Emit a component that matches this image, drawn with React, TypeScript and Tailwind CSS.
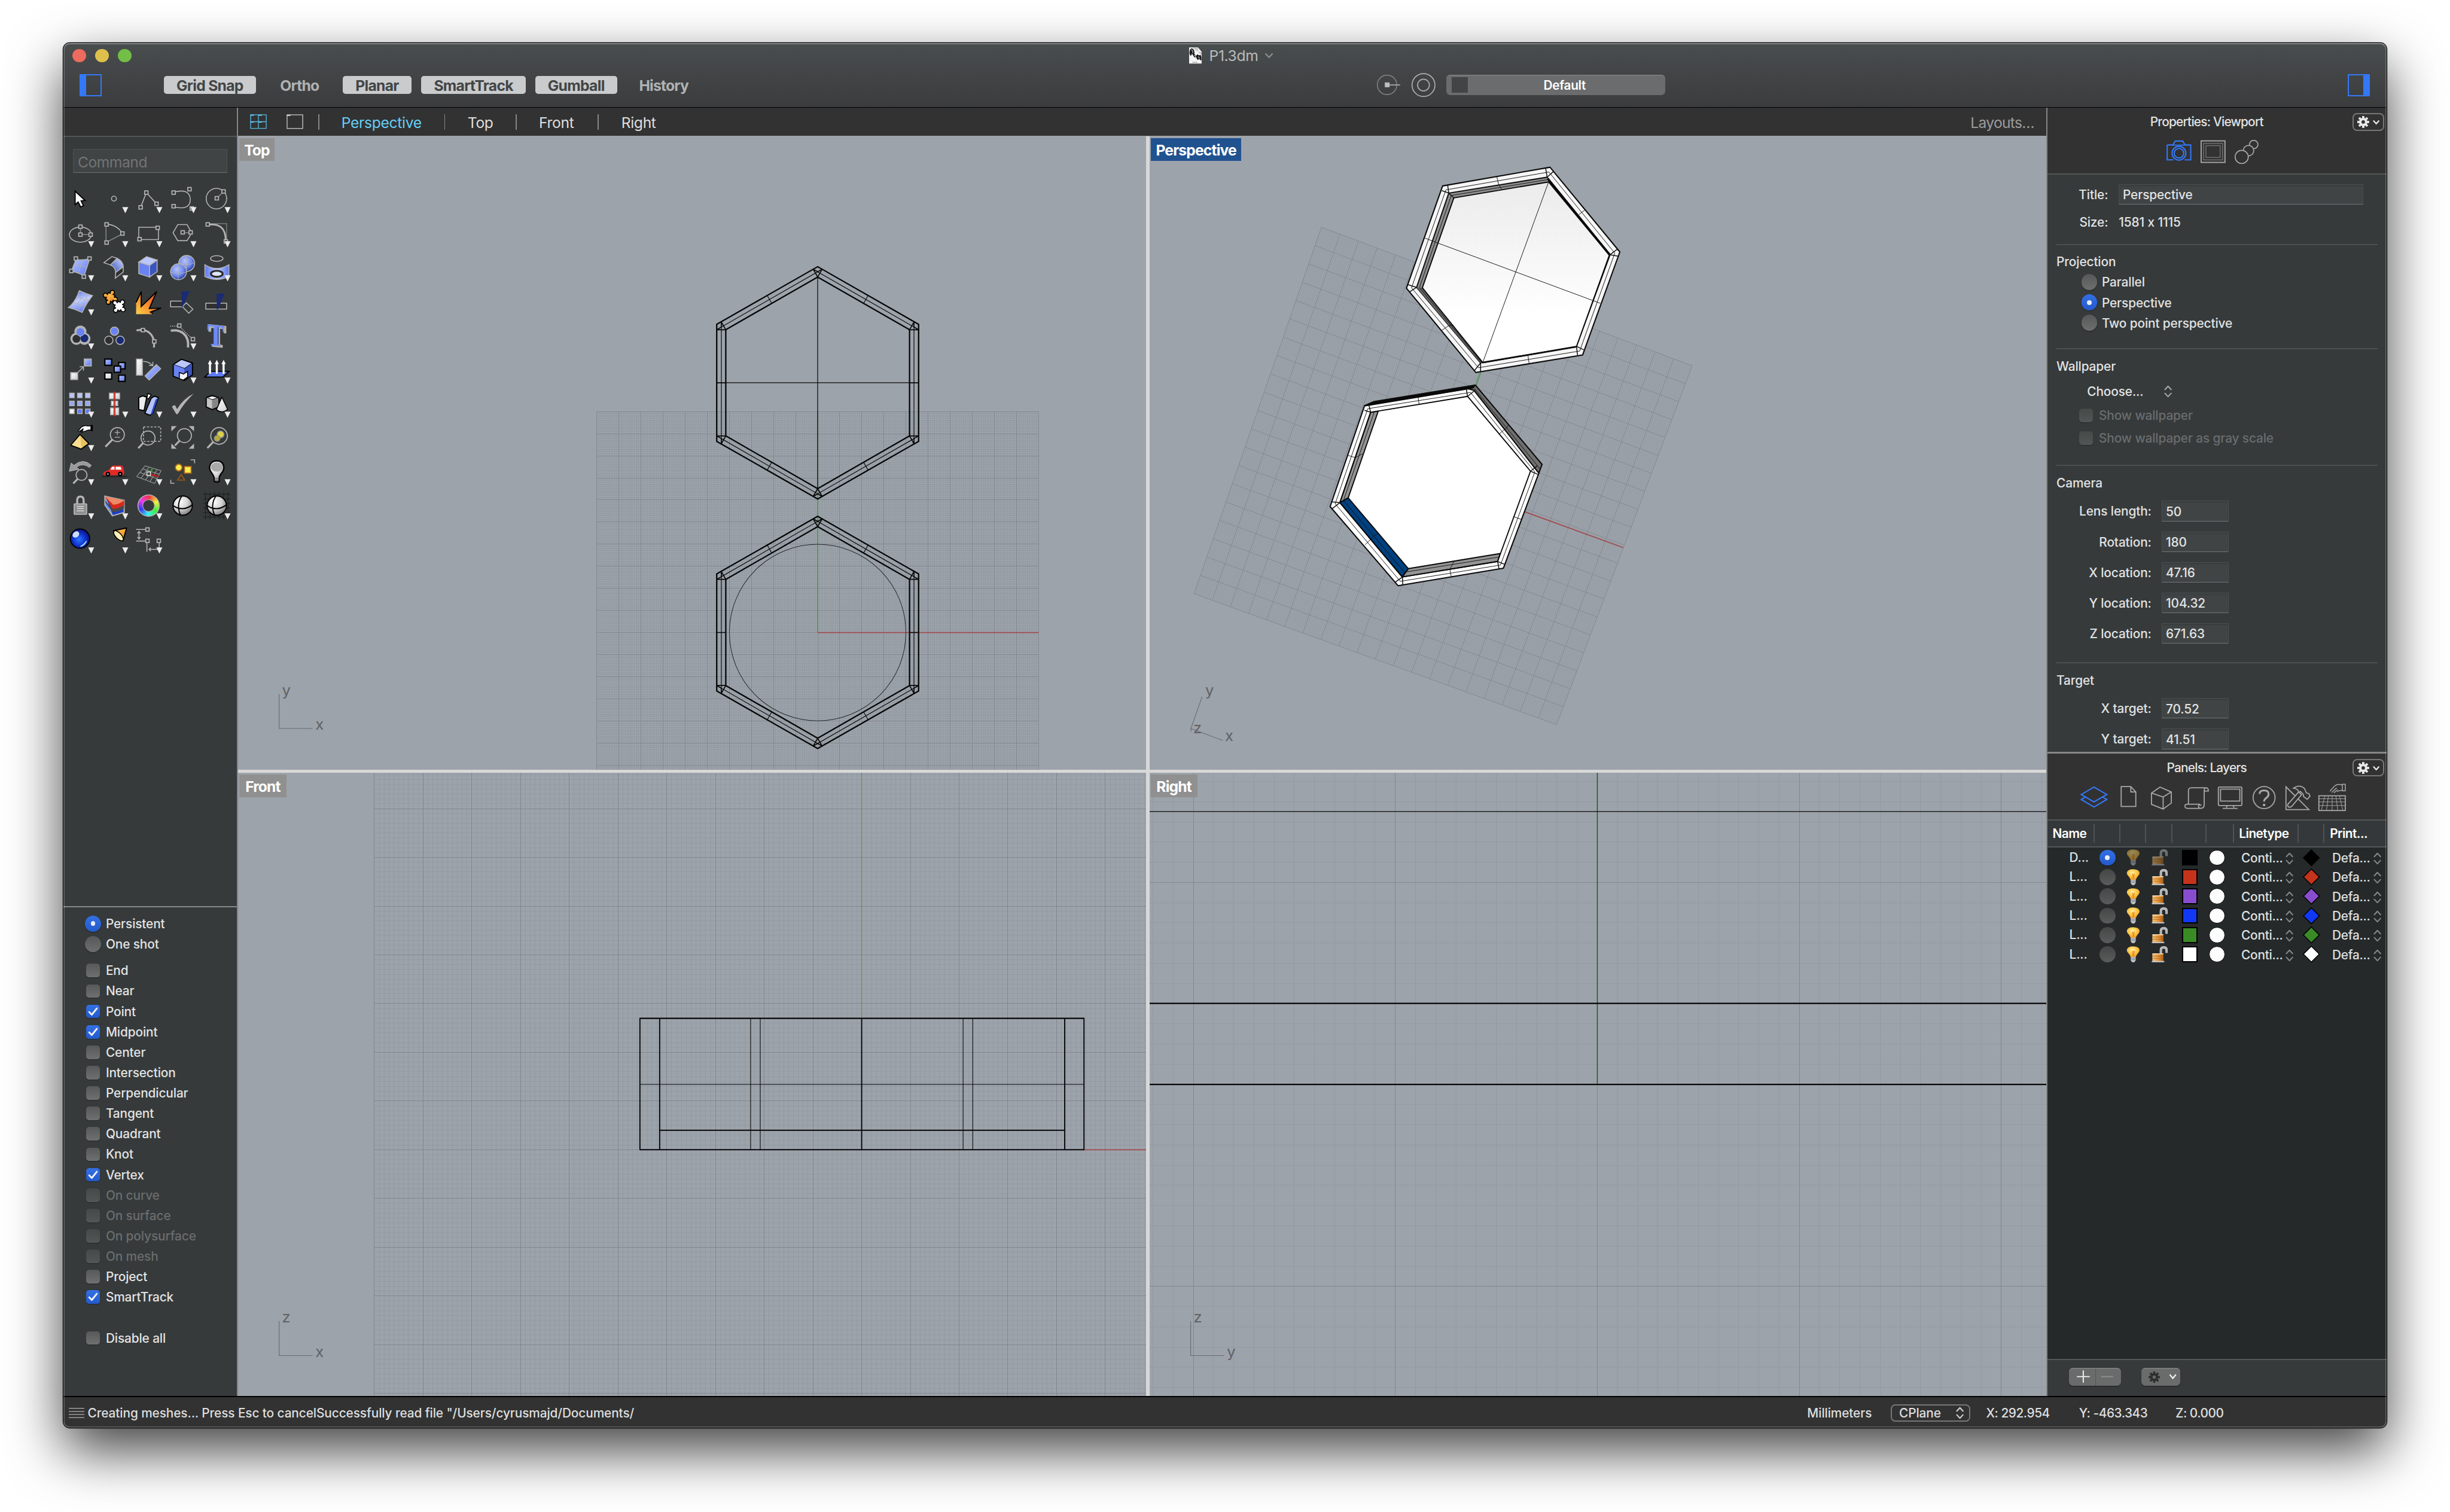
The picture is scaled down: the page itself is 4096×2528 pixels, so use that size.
import React from 'react';

type Kids = { children?: React.ReactNode };

/* ------------------------------------------------------------------ */
/* Tool palette                                                        */
/* ------------------------------------------------------------------ */

const G = '#b4b4b4';
const DIM = '#838686';
const PANEL = '#363a3b';

function Defs() {
  return (
    <svg className="absolute h-0 w-0">
      <defs>
        <linearGradient id="blue" x1="0" y1="0" x2="1" y2="1">
          <stop offset="0" stopColor="#b9c6fb" />
          <stop offset="1" stopColor="#5a76f2" />
        </linearGradient>
        <linearGradient id="blueDark" x1="1" y1="0" x2="0" y2="1">
          <stop offset="0" stopColor="#d3dcff" />
          <stop offset="1" stopColor="#2c48b8" />
        </linearGradient>
        <linearGradient id="cylinder" x1="0" y1="0" x2="1" y2="0">
          <stop offset="0" stopColor="#5b77f4" />
          <stop offset="0.5" stopColor="#c3cefc" />
          <stop offset="1" stopColor="#5b77f4" />
        </linearGradient>
        <linearGradient id="sheet" x1="0.3" y1="0" x2="0.6" y2="1">
          <stop offset="0" stopColor="#5b77f4" />
          <stop offset="0.45" stopColor="#c3cefc" />
          <stop offset="1" stopColor="#5b77f4" />
        </linearGradient>
        <radialGradient id="blueBall" cx="0.4" cy="0.35" r="0.7">
          <stop offset="0" stopColor="#b7c4fb" />
          <stop offset="0.6" stopColor="#6f87ee" />
          <stop offset="1" stopColor="#1c3190" />
        </radialGradient>
        <radialGradient id="deepBall" cx="0.45" cy="0.55" r="0.6">
          <stop offset="0" stopColor="#2a78ff" />
          <stop offset="0.55" stopColor="#1030c8" />
          <stop offset="1" stopColor="#060a6e" />
        </radialGradient>
        <radialGradient id="whiteBall" cx="0.35" cy="0.3" r="0.8">
          <stop offset="0" stopColor="#ffffff" />
          <stop offset="0.5" stopColor="#d4d4d4" />
          <stop offset="1" stopColor="#6a6a6a" />
        </radialGradient>
        <linearGradient id="white" x1="0" y1="0" x2="1" y2="1">
          <stop offset="0" stopColor="#ffffff" />
          <stop offset="1" stopColor="#cfcfcf" />
        </linearGradient>
        <linearGradient id="fire" x1="1" y1="0" x2="0" y2="1">
          <stop offset="0.1" stopColor="#ee4522" />
          <stop offset="0.55" stopColor="#f58a2e" />
          <stop offset="1" stopColor="#fcd24a" />
        </linearGradient>
        <linearGradient id="gold" x1="0" y1="0" x2="1" y2="1">
          <stop offset="0" stopColor="#fbd45a" />
          <stop offset="1" stopColor="#ef7a1c" />
        </linearGradient>
        <radialGradient id="lamp" cx="0.45" cy="0.35" r="0.65">
          <stop offset="0" stopColor="#fff3a8" />
          <stop offset="0.6" stopColor="#fbc23c" />
          <stop offset="1" stopColor="#ee9a2b" />
        </radialGradient>
        <linearGradient id="brass" x1="0" y1="0" x2="1" y2="0">
          <stop offset="0" stopColor="#f8c57c" />
          <stop offset="0.6" stopColor="#dd8f36" />
          <stop offset="1" stopColor="#a65a14" />
        </linearGradient>
        <linearGradient id="face" x1="0" y1="0" x2="0" y2="1">
          <stop offset="0" stopColor="#ebebeb" />
          <stop offset="0.75" stopColor="#ffffff" />
        </linearGradient>
      </defs>
    </svg>
  );
}

function Sq({ x, y }: { x: number; y: number }) {
  return <rect x={x - 9} y={y - 9} width="18" height="18" fill={PANEL} stroke={G} strokeWidth="5.5" />;
}
function P({ d, w = 5, c = G, f = 'none', ...rest }: { d: string; w?: number; c?: string; f?: string } & Record<string, unknown>) {
  return <path d={d} stroke={c} strokeWidth={w} fill={f} {...rest} />;
}
function Lens({ x, y, r, hx, hy }: { x: number; y: number; r: number; hx: number; hy: number }) {
  const k = r / Math.hypot(hx - x, hy - y);
  return (
    <>
      <circle cx={x} cy={y} r={r} fill="none" stroke={G} strokeWidth="5.5" />
      <path d={`M${x + (hx - x) * k} ${y + (hy - y) * k}L${hx} ${hy}`} stroke={G} strokeWidth="10" />
    </>
  );
}

function Ring() {
  const seg = Array.from({ length: 36 }, (_, i) => i);
  const pt = (a: number) => `${456 + 43 * Math.cos(a)} ${816 + 43 * Math.sin(a)}`;
  return (
    <>
      <circle cx="456" cy="816" r="59" fill={G} />
      {seg.map((i) => {
        const a = (i * Math.PI) / 18 - Math.PI / 2;
        return <path key={i} d={`M${pt(a)}A43 43 0 0 1 ${pt(a + 0.19)}`} fill="none" stroke={`hsl(${i * 10} 90% 58%)`} strokeWidth="22" />;
      })}
      <circle cx="456" cy="816" r="31" fill={PANEL} stroke={G} strokeWidth="3" />
    </>
  );
}
function WireSphere({ x }: { x: number }) {
  return (
    <>
      <circle cx={x} cy="816" r="51" fill="url(#whiteBall)" stroke="#000" strokeWidth="6" />
      <P d={`M${x - 5} 766Q${x - 35} 812 ${x - 12} 866M${x - 51} 816Q${x} 850 ${x + 51} 812`} c="#000" w={6} />
    </>
  );
}
function Puzzle({ x, y, fill, a }: { x: number; y: number; fill: string; a: number }) {
  const knobs = [
    [0, -28],
    [0, 28],
    [-28, 0],
    [28, 0],
  ];
  return (
    <g transform={`translate(${x} ${y}) rotate(${a})`}>
      <g fill="#000">
        <rect x="-22" y="-22" width="44" height="44" />
        {knobs.map(([kx, ky], i) => (
          <circle key={i} cx={kx} cy={ky} r="14" />
        ))}
      </g>
      <rect x="-16.500" y="-16.500" width="33" height="33" fill={fill} />
      {knobs.map(([kx, ky], i) => (
        <g key={i} fill={fill}>
          <circle cx={kx} cy={ky} r="8.500" />
          <circle cx={kx * 0.6} cy={ky * 0.6} r="6" />
        </g>
      ))}
    </g>
  );
}

/* Two sheets of five columns; a cell is 180 units wide, first one at (6, top). */
const upper: [boolean, React.ReactNode][] = [
  [false, <path d="M68 262V334L84 320L97 346L112 339L100 314L121 312Z" fill="#fff" stroke="#000" strokeWidth="6" />],
  [true, <circle cx="273" cy="302" r="13" fill="none" stroke={G} strokeWidth="5" />],
  [true, <><P d="M414 348L444 270L498 329" /><Sq x={414} y={348} /><Sq x={444} y={270} /><Sq x={498} y={329} /></>],
  [true, <><P d="M588 268C640 254 674 262 676 304C678 350 640 358 588 345" /><Sq x={588} y={270} /><Sq x={588} y={342} /><Sq x={672} y={252} /><Sq x={684} y={354} /></>],
  [true, <><circle cx="814" cy="302" r="54" fill="none" stroke={G} strokeWidth="5" /><P d="M816 300L852 264" c={DIM} /><Sq x={816} y={300} /><Sq x={852} y={264} /></>],
  [true, <><ellipse cx="96" cy="492" rx="58" ry="40" fill="none" stroke={G} strokeWidth="5" /><P d="M96 450V492H150" c={DIM} /><Sq x={96} y={450} /><Sq x={96} y={492} /><Sq x={150} y={492} /></>],
  [true, <><P d="M231 440V534L318 488" c={DIM} /><P d="M234 437Q290 440 318 486" /><Sq x={234} y={438} /><Sq x={318} y={486} /><Sq x={234} y={534} /></>],
  [true, <><P d="M404 453H508V518H404Z" /><Sq x={504} y={456} /><Sq x={408} y={516} /></>],
  [true, <><P d="M585 482L610 439H659L684 482L659 524H610Z" /><P d="M636 482H678" c={DIM} /><Sq x={636} y={480} /><Sq x={678} y={480} /></>],
  [true, <><P d="M768 434H868V528" c={DIM} w={4} /><P d="M778 439C830 436 862 455 863 520" w={9} /><Sq x={768} y={438} /><Sq x={864} y={528} /></>],
  [true, <><P d="M72 624Q108 628 145 620L115 710Q82 690 48 686Z" f="url(#blue)" /><P d="M108 624L84 698M60 655Q95 650 130 664" w={3} /><Sq x={72} y={618} /><Sq x={144} y={618} /><Sq x={48} y={684} /><Sq x={114} y={714} /></>],
  [true, <><P d="M220 640L262 608L290 617L255 652Z" f="#2f3031" /><P d="M255 652L290 617Q322 632 322 662L282 692Q282 664 255 652Z" f="url(#blueDark)" /><P d="M282 692L322 662V690L280 722Z" f="#2f3031" /></>],
  [true, <><P d="M404 637L445 608L501 626L461 655Z" f="#bcc8fb" /><P d="M404 637L461 655V716L404 698Z" f="#6a83f3" /><P d="M461 655L501 626V688L461 716Z" f="#3a55bd" /></>],
  [true, <><circle cx="657" cy="644" r="42" fill="url(#blueBall)" stroke={G} strokeWidth="5" /><P d="M655 602V686M616 640Q657 660 698 640" w={3} /><circle cx="614" cy="688" r="42" fill="url(#blueBall)" stroke={G} strokeWidth="5" /><P d="M612 646V730M573 690Q614 704 655 690" w={3} /></>],
  [true, <><ellipse cx="816" cy="618" rx="33" ry="15" fill="none" stroke={G} strokeWidth="5" /><P d="M753 651Q816 690 880 651V713Q816 745 753 713Z" f="url(#cylinder)" /><ellipse cx="816" cy="699" rx="31" ry="16" fill="#dfe5ff" stroke="#2b2b2b" strokeWidth="10" /></>],
  [true, <><P d="M90 788Q125 805 160 814Q130 850 105 903Q70 885 33 877Q72 845 90 788Z" f="url(#sheet)" /><P d="M113 798Q95 850 57 884M137 807Q115 850 81 893M77 820Q110 838 148 838M58 850Q90 862 124 868" w={3} /></>],
  [false, <><Puzzle x={254} y={823} fill="url(#gold)" a={22} /><Puzzle x={300} y={870} fill="#fff" a={40} /></>],
  [false, <><path d="M390 912V850L417 793L416 872L499 792L460 880L522 880L466 900L482 912Z" fill="url(#fire)" /><P d="M390 850L417 793V872L499 792L460 882L522 880L466 901L480 910" c="#000" w={6} /></>],
  [false, <><rect x="572" y="843" width="62" height="30" fill="#2f3031" stroke={G} strokeWidth="5" /><P d="M634 872L655 852L690 886L668 907Z" /><path d="M631 792H673L634 875H631Z" fill="#1a2a74" /></>],
  [false, <><rect x="758" y="854" width="110" height="31" fill="#2f3031" stroke={G} strokeWidth="5" /><path d="M816 804H857L822 887H816Z" fill="#1a2a74" /></>],
  [true, <><g fill={G}><circle cx="96" cy="1004" r="32" /><circle cx="75" cy="1042" r="32" /><circle cx="117" cy="1042" r="32" /></g><circle cx="117" cy="1039" r="21" fill="#1a2a74" /><circle cx="75" cy="1042" r="21" fill="#2f3031" /><circle cx="96" cy="1006" r="22" fill="#6a83f3" stroke={G} strokeWidth="3" /></>],
  [false, <g stroke={G} strokeWidth="5"><circle cx="276" cy="1002" r="22" fill="#6a83f3" /><circle cx="246" cy="1050" r="22" fill="#2f3031" /><circle cx="306" cy="1050" r="22" fill="#1a2a74" /></g>],
  [false, <><P d="M392 998C450 985 492 1020 484 1088" w={10} /><Sq x={426} y={996} /><Sq x={486} y={1056} /></>],
  [true, <><P d="M573 999C625 990 672 1020 664 1088" w={12} /><P d="M570 975H610M622 980L688 1044" strokeDasharray="5 5" /><Sq x={618} y={972} /><Sq x={690} y={1044} /></>],
  [false, <g fontFamily="'Liberation Serif', serif" fontWeight="700" fontSize="166" textAnchor="middle" transform="translate(812 1079) skewY(6) scale(.82 1)"><text x="8" y="3" fill="#27409e" stroke={G} strokeWidth="9">T</text><text x="-2" y="0" fill="#7289f3">T</text></g>],
];

const cells9 = [0, 1, 2].flatMap((j) => [0, 1, 2].map((i) => [i, j]));
const lower: [boolean, React.ReactNode][] = [
  [true, <><rect x="117" y="39" width="36" height="36" fill="url(#blue)" stroke={G} strokeWidth="6" /><rect x="45" y="111" width="36" height="36" fill="url(#white)" stroke={G} strokeWidth="6" /><P d="M82 110L110 82M92 80H112V100" /></>],
  [false, <g stroke="#000" strokeWidth="7"><rect x="225" y="39" width="36" height="33" fill="url(#blue)" /><rect x="298" y="57" width="34" height="34" fill="url(#blue)" /><rect x="274" y="76" width="34" height="33" fill="url(#blue)" /><rect x="225" y="112" width="36" height="33" fill="url(#white)" /><rect x="298" y="124" width="34" height="33" fill="url(#blue)" /></g>],
  [false, <><rect x="392" y="39" width="31" height="85" fill="url(#white)" stroke={G} strokeWidth="5" /><P d="M437 128L497 68L520 90L459 150Z" f="url(#blue)" /><P d="M427 51Q462 52 476 74M458 72L478 74L479 54" /></>],
  [true, <g strokeLinejoin="round"><P d="M586 68L629 40L688 60L646 90Z" f="#bcc8fb" c="#000" w={6} /><P d="M586 68L646 90V152L586 130Z" f="#6a83f3" c="#6a83f3" w={1} /><P d="M646 90L688 60V122L646 152Z" f="#3a55bd" c="#3a55bd" w={1} /><P d="M586 68V130L646 152L688 122V60" c="#000" w={6} /><P d="M618 110L640 118L662 104V134L640 150L618 143Z" f="#f4f4f4" c="#000" w={5} /></g>],
  [true, <><P d="M752 134L785 104H880L848 134Z" f="#5f7bf4" c="#000" w={6} />{[780, 816, 852].map((x) => <path key={x} d={`M${x - 6} 118V66H${x - 12}L${x} 42L${x + 12} 66H${x + 6}V118Z`} fill="#fff" stroke="#222" strokeWidth="1" />)}</>],
  [true, <>{cells9.map(([i, j]) => <rect key={`${i}${j}`} x={39 + 42 * i} y={219 + 42 * j} width="24" height="24" fill={i === 0 && j === 2 ? '#f4f4f4' : j === 0 ? '#b9c5fb' : i === 0 || j === 1 ? '#93a6f8' : '#5f7bf4'} stroke={G} strokeWidth="5" />)}</>],
  [true, <><g fill="url(#white)" stroke={G} strokeWidth="5"><rect x="249" y="219" width="54" height="30" /><rect x="259" y="261" width="34" height="24" /><rect x="255" y="297" width="43" height="36" /></g><path d="M276 210V342" stroke="#c22a22" strokeOpacity=".85" strokeWidth="11" /></>],
  [true, <g strokeLinejoin="round"><P d="M447 245L452 220L470 228L455 250Z" f="#fff" c="#000" /><P d="M404 242L424 233L446 240L432 312L404 305Z" f="#ececec" c="#000" w={6} /><P d="M470 245L488 235L508 243L478 325L464 336L436 325Z" f="#b5c2fb" c="#000" w={6} /><path d="M506 245L478 326L466 334L493 252Z" fill="#2f4cc0" /></g>],
  [true, <path d="M579 291Q590 278 597 285L606 303Q640 248 694 221Q640 275 612 326Q606 334 601 328Z" fill={G} />],
  [true, <g strokeLinejoin="round"><P d="M760 242L792 232L827 243L792 255Z" f="#fafafa" c="#000" w={6} /><P d="M760 242L792 255V306L760 292Z" f="#c4c4c4" c="#c4c4c4" w={1} /><P d="M792 255L827 243V292L792 306Z" f="#868686" c="#868686" w={1} /><P d="M760 242V292L792 306L827 292V243" c="#000" w={6} /><P d="M843 240L814 306Q844 330 873 304Z" f="url(#white)" c="#000" w={5} /></g>],
  [true, <><P d="M94 440L46 498L100 518L141 488Z" f="#e8c25e" c="#000" w={6} strokeLinejoin="round" /><path d="M95 444L101 513L50 495Z" fill="#f8de8e" /><P d="M82 425L100 402Q118 388 136 396L152 394V416Q135 416 120 423L100 430Q112 418 110 410M92 428L112 408" f="#fff" c="#000" w={4} /><rect x="150" y="390" width="12" height="32" /></>],
  [false, <><Lens x={291} y={441} r={37} hx={228} hy={505} /><P d="M277 430H305M291 416V444M277 455H305" w={4} /></>],
  [false, <><Lens x={453} y={459} r={37} hx={401} hy={513} /><rect x="429" y="400" width="91" height="77" fill="none" stroke={G} strokeWidth="5" strokeDasharray="11 8" /></>],
  [false, <><Lens x={645} y={446} r={37} hx={595} hy={499} /><path d="M576 396H604L576 424ZM696 396H668L696 424ZM576 516H604L576 488ZM696 516H668L696 488Z" fill={G} /></>],
  [false, <><Lens x={828} y={448} r={44} hx={766} hy={512} /><circle cx="836" cy="440" r="18" fill="#dcd04a" stroke="#8f8f8f" strokeWidth="5" /><circle cx="818" cy="461" r="15" fill="#b8ad35" stroke="#8f8f8f" strokeWidth="5" /></>],
  [true, <><Lens x={102} y={654} r={29} hx={58} hy={699} /><path d="M37 635L47 591L62 603Q110 562 154 603L144 615Q110 587 75 613L88 624Z" fill="#9a9a9a" stroke={G} strokeWidth="3" /></>],
  [true, <><rect x="210" y="659" width="132" height="7" fill="#232526" /><path d="M216 650Q216 634 244 630L258 610Q264 604 276 604H312Q324 606 326 632Q330 652 322 655L224 656Q216 655 216 650Z" fill="#e22a26" /><path d="M254 626L263 611H276V626ZM282 611H308L314 626H282Z" fill="#fff" /><g fill="#ddd" stroke="#000" strokeWidth="8"><circle cx="241" cy="649" r="8" /><circle cx="306" cy="649" r="8" /></g></>],
  [true, <><P d="M437 606L522 631M424 622L512 650M409 641L500 673M393 663L488 699M437 606L393 663M459 612L415 672M480 619L440 681M501 625L463 690M522 631L488 699" c="#929595" w={4} /><P d="M456 648L478 618" c="#3a8a2a" w={9} /><P d="M456 648L508 662" c="#c01e1e" w={9} /><rect x="447" y="638" width="19" height="19" fill="#444" stroke="#ddd" strokeWidth="5" /></>],
  [true, <g stroke="#a8631c" strokeWidth="6"><circle cx="615" cy="615" r="18" fill="#fbea4e" /><rect x="645" y="609" width="36" height="36" fill="#fbea4e" /><path d="M628 652L609 681H647Z" fill="none" stroke="#96561a" /><path d="M678 574H699V592M573 680V698H592" stroke={G} fill="none" strokeWidth="5" /></g>],
  [true, <><path d="M802 688L802 668Q798 655 787 640Q776 625 778 610Q784 580 815 579Q848 580 853 608Q855 628 843 642Q830 658 829 668V688Q815 696 802 688Z" fill="url(#whiteBall)" stroke="#000" strokeWidth="7" /><ellipse cx="815" cy="612" rx="30" ry="24" fill="#a9a9a9" /><path d="M803 674H828M803 684H828" stroke="#555" strokeWidth="3" /></>],
  [true, <><path d="M79 808V788Q79 768 96 768Q113 768 113 788V808" fill="none" stroke={G} strokeWidth="11" /><rect x="63" y="807" width="66" height="55" rx="3" fill="#8d8f8f" stroke={G} strokeWidth="6" /><path d="M77 821H115M79 832H113M77 844H115" stroke="#e5e5e5" strokeWidth="4" /></>],
  [true, <><path d="M225 766L265 870L327 852V788Z" fill="#1c3fc4" stroke={G} strokeWidth="6" /><path d="M225 766V812L265 870" fill="#5f8bff" stroke={G} strokeWidth="6" /><path d="M226 768L327 789V812Q300 835 266 834Z" fill="#d42a1c" /><path d="M226 768L327 789Q300 810 270 812Z" fill="#ee8a66" /><path d="M227 790L266 834Q300 835 326 812V830Q300 850 266 850L228 800Z" fill="#4a4a4a" /></>],
  [true, <Ring />],
  [false, <WireSphere x={636} />],
  [true, <><P d="M744 756H888M744 780H888M744 804H888M744 828H888M744 852H888M744 876H888M756 744V888M780 744V888M804 744V888M828 744V888M852 744V888M876 744V888" c="#1f2223" w={4} /><WireSphere x={816} /></>],
  [true, <><circle cx="94" cy="990" r="51" fill="url(#deepBall)" stroke="#000" strokeWidth="6" /><ellipse cx="72" cy="968" rx="19" ry="15" transform="rotate(-40 72 968)" fill="#e6efff" fillOpacity=".9" /><path d="M128 1002Q120 1025 96 1032Q120 1018 128 1002Z" fill="#9fdcff" stroke="#9fdcff" strokeWidth="5" /></>],
  [true, <g strokeLinejoin="round"><P d="M271 948L340 934L321 1002Z" f="url(#gold)" c="#000" w={6} /><ellipse cx="297" cy="975" rx="34" ry="15" transform="rotate(47 297 975)" fill="#fff0b8" stroke="#000" strokeWidth="5" /></g>],
  [true, <><P d="M390 942H440M390 1003H440M447 1010V1060M512 1010V1046M405 952V992M397 962L405 952L413 962M397 982L405 992L413 982M458 1047H504M468 1038L458 1047L468 1056" /><Sq x={450} y={942} /><Sq x={450} y={1002} /><Sq x={510} y={1002} /></>],
];

function ToolSheet({ items, top }: { items: [boolean, React.ReactNode][]; top: number }) {
  return (
    <div className="grid grid-cols-[repeat(5,30px)] auto-rows-[30px]">
      {items.map(([flyout, art], i) => {
        const x = 6 + 180 * (i % 5);
        const y = top + 180 * Math.floor(i / 5);
        return (
          <svg key={i} viewBox={`${x} ${y} 180 180`} className="h-[30px] w-[30px] overflow-visible">
            {art}
            {flyout && <path d={`M${x + 131} ${y + 134}h32l-16 32z`} fill="#ececec" />}
          </svg>
        );
      })}
    </div>
  );
}

/* ------------------------------------------------------------------ */
/* Small controls                                                      */
/* ------------------------------------------------------------------ */

function Radio({ on, dark }: { on?: boolean; dark?: boolean }) {
  return (
    <span
      className={
        'flex h-[14px] w-[14px] shrink-0 items-center justify-center rounded-full ' +
        (on
          ? 'bg-linear-to-b from-[#3470e4] to-[#2459cb] shadow-[0_0.5px_1px_rgba(0,0,0,.4)]'
          : dark
            ? 'bg-linear-to-b from-[#454747] to-[#5a5c5c]'
            : 'bg-linear-to-b from-[#565958] to-[#6c6f6e] shadow-[0_0.5px_1px_rgba(0,0,0,.4)]')
      }
    >
      {on && <span className="h-[4.2px] w-[4.2px] rounded-full bg-[#e9effb]" />}
    </span>
  );
}

function Check({ on, off }: { on?: boolean; off?: boolean }) {
  return (
    <span
      className={
        'flex h-[12px] w-[12px] shrink-0 items-center justify-center rounded-[2.6px] shadow-[0_0.5px_0.5px_rgba(0,0,0,.35)] ' +
        (on ? 'bg-linear-to-b from-[#3470e4] to-[#2459cb]' : off ? 'bg-linear-to-b from-[#454948] to-[#525655]' : 'bg-linear-to-b from-[#565958] to-[#6e7170]')
      }
    >
      {on && (
        <svg viewBox="0 0 12 12" className="h-[12px] w-[12px]">
          <path d="M2.7 6.3L5 8.7L9.4 3.2" fill="none" stroke="#eef3fd" strokeWidth="1.5" strokeLinecap="round" strokeLinejoin="round" />
        </svg>
      )}
    </span>
  );
}

function Stepper({ c = '#a5a7a7' }: { c?: string }) {
  return (
    <svg viewBox="0 0 7 11" className="h-[11px] w-[7px] shrink-0">
      <path d="M.8 3.8L3.5 .9L6.2 3.8M.8 7.2L3.5 10.1L6.2 7.2" fill="none" stroke={c} strokeWidth="1.1" strokeLinecap="round" strokeLinejoin="round" />
    </svg>
  );
}

function Gear({ className, color, hole }: { className: string; color: string; hole: string }) {
  return (
    <svg viewBox="-10 -10 20 20" className={className}>
      {[0, 45, 90, 135].map((a) => (
        <rect key={a} x="-1.9" y="-10" width="3.8" height="20" fill={color} transform={`rotate(${a})`} />
      ))}
      <circle r="7" fill={color} />
      <circle r="2.9" fill={hole} />
    </svg>
  );
}

function GearMenu() {
  return (
    <div className="mr-[2px] flex h-[15.5px] w-[28px] items-center justify-center gap-[3px] rounded-[4px] border-[1.1px] border-[#767777]">
      <Gear className="h-[10.5px] w-[10.5px]" color="#e8e8e8" hole="#323232" />
      <svg viewBox="0 0 6 4" className="mt-[1px] h-[4px] w-[6px]">
        <path d="M.8 .7L3 3.1L5.2 .7" fill="none" stroke="#e8e8e8" strokeWidth="1.2" strokeLinecap="round" />
      </svg>
    </div>
  );
}

function Field({ w, children }: { w: string } & Kids) {
  return (
    <div className={`${w} flex h-[18px] items-center border-[0.6px] border-[#4b4f50] border-b-[#727575] bg-[#404445] pt-[1.8px] pl-[3px] shadow-[inset_0_1px_1px_rgba(0,0,0,.12)]`}>{children}</div>
  );
}

/* ------------------------------------------------------------------ */
/* Header                                                              */
/* ------------------------------------------------------------------ */

function Toggle({ w, children }: { w: string } & Kids) {
  return (
    <div className={`${w} flex h-[15.5px] items-center justify-center rounded-[2.5px] bg-[#c9cbcc] pt-[0.8px] text-[13px] font-bold tracking-[-0.37px] text-[#424546]`}>{children}</div>
  );
}

function Header() {
  return (
    <div className="flex h-[57px] shrink-0 flex-col border-b border-black bg-linear-to-b from-[#494d4e] to-[#3b3c3e]">
      <div className="flex h-[22px] items-center pl-[8px]">
        <div className="flex gap-[8px]">
          <span className="h-[12px] w-[12px] rounded-full bg-[#ed6a5e]" />
          <span className="h-[12px] w-[12px] rounded-full bg-[#e0c04c]" />
          <span className="h-[12px] w-[12px] rounded-full bg-[#72be47]" />
        </div>
        <svg viewBox="0 0 22 28" className="ml-[932.4px] h-[14.5px] w-[11.2px]">
          <path d="M0 0H15L22 8V28H0Z" fill="#f4f4f4" />
          <path d="M6 0H15L22 8V14Z" fill="#c4c4c4" />
          <path d="M15 0L22 8H15Z" fill="#eeeeee" />
          <path d="M1 12Q0 5 3 2Q6 1 8 4Q10 8 9 11L12 15L14 12Q18 15 20 13Q22 17 21 23L17 20L15 22L12 18L9 17L5 11L3 15Z" fill="#1b1b1b" />
          <path d="M4 4Q7 6 6 10M9 13L13 19M16 16L18 19" stroke="#c4c4c4" strokeWidth="1.2" fill="none" />
          <path d="M6 26H15" stroke="#888" strokeWidth="1.600" strokeDasharray="2 1" />
        </svg>
        <span className="ml-[6.5px] w-[49px] pt-[0.8px] text-[13px] tracking-[-0.2px] whitespace-nowrap text-[#b9bcbc]">P1.3dm</span>
        <svg viewBox="0 0 8 5" className="h-[5px] w-[8px]">
          <path d="M.8 .8L4 4.1L7.2 .8" fill="none" stroke="#8b8e8e" strokeWidth="1.2" />
        </svg>
      </div>
      <div className="flex h-[30px] items-center">
        <div className="ml-[14px] h-[19.5px] w-[19.5px] border-[1.1px] border-l-[6px] border-[#3478f6]" />
        <div className="ml-[55px]" />
        <Toggle w="w-[81px]">Grid Snap</Toggle>
        <span className="ml-[21.5px] w-[55px] pt-[1.4px] text-[13px] font-bold tracking-[-0.42px] text-[#b0b3b3]">Ortho</span>
        <Toggle w="w-[61px]">Planar</Toggle>
        <div className="w-[8.5px]" />
        <Toggle w="w-[92px]">SmartTrack</Toggle>
        <div className="w-[8.5px]" />
        <Toggle w="w-[72px]">Gumball</Toggle>
        <span className="ml-[19.5px] w-[60px] pt-[1.4px] text-[13px] font-bold tracking-[-0.42px] text-[#b0b3b3]">History</span>
        <svg viewBox="0 0 22 22" className="ml-auto h-[22px] w-[22px]">
          <circle cx="10" cy="11" r="8.6" fill="none" stroke="#7c7f80" strokeWidth=".9" />
          <rect x="8" y="8.9" width="4.2" height="4.2" fill="#bcbfbf" />
          <path d="M12 11.1H21.5" stroke="#9b9e9e" strokeWidth="1.1" />
        </svg>
        <svg viewBox="0 0 22 22" className="ml-[9px] h-[22px] w-[22px]">
          <circle cx="11" cy="11.2" r="10.1" fill="none" stroke="#aeb1b1" strokeWidth=".9" />
          <circle cx="11" cy="11.2" r="5.2" fill="none" stroke="#aeb1b1" strokeWidth=".9" />
        </svg>
        <div className="mr-[602px] ml-[9px] flex h-[18px] w-[193px] items-center rounded-[3.5px] bg-[#6a6c6d] pl-[5px] text-[11px] font-semibold tracking-[-0.2px] text-white shadow-[inset_0_0.6px_0_#838586]">
          <span className="h-[14px] w-[14px] bg-[#424546]" />
          <span className="mr-[3px] flex-1 pt-[1.4px] text-center">Default</span>
        </div>
        <div className="mr-[14.6px] h-[19.5px] w-[19.5px] border-[1.1px] border-r-[6px] border-[#3478f6]" />
      </div>
    </div>
  );
}

/* ------------------------------------------------------------------ */
/* Left column                                                         */
/* ------------------------------------------------------------------ */

const snaps: [string, 0 | 1 | 2][] = [
  ['End', 0], ['Near', 0], ['Point', 1], ['Midpoint', 1], ['Center', 0], ['Intersection', 0], ['Perpendicular', 0],
  ['Tangent', 0], ['Quadrant', 0], ['Knot', 0], ['Vertex', 1], ['On curve', 2], ['On surface', 2],
  ['On polysurface', 2], ['On mesh', 2], ['Project', 0], ['SmartTrack', 1],
];

function SnapRow({ label, state }: { label: string; state: number }) {
  return (
    <div className="flex h-[18px] items-center gap-[5.3px] pl-[20px]">
      <Check on={state === 1} off={state === 2} />
      <span className={'pt-[1px] ' + (state === 2 ? 'text-[#6a6d6d]' : '')}>{label}</span>
    </div>
  );
}

function RadioRow({ on, children, gap = 'gap-[4px]', pad = 'pl-[30px]' }: { on?: boolean; gap?: string; pad?: string } & Kids) {
  return (
    <div className={`flex h-[18px] items-center ${gap} ${pad}`}>
      <Radio on={on} />
      <span className="pt-[1.4px]">{children}</span>
    </div>
  );
}

function LeftColumn() {
  return (
    <div className="flex w-[154px] shrink-0 flex-col border-r-[1.1px] border-[#868686] bg-[#363a3b]">
      <div className="h-[26px] shrink-0 border-b-[1.1px] border-[#545656] bg-[#323232]" />
      <div className="h-[678px] shrink-0 pt-[10.5px]">
        <div className="ml-[8.5px] flex h-[21px] w-[136px] items-center border-[0.6px] border-[#4e5253] border-b-[#6d7070] bg-[#404445] pt-[2.6px] pl-[3.5px] text-[13px] tracking-[-0.25px] text-[#717474]">
          Command
        </div>
        <div className="h-[8px]" />
        <ToolSheet items={upper} top={213} />
        <ToolSheet items={lower} top={3} />
      </div>
      <div className="h-[1px] shrink-0 bg-[#868988]" />
      <div className="flex-1 pt-[5.4px] text-[11px] font-medium tracking-[-0.07px] text-[#e2e3e3]">
        <RadioRow on gap="gap-[4.3px]" pad="pl-[19px]">Persistent</RadioRow>
        <RadioRow gap="gap-[4.3px]" pad="pl-[19px]">One shot</RadioRow>
        <div className="h-[5.4px]" />
        {snaps.map(([label, state]) => <SnapRow key={label} label={label} state={state} />)}
        <div className="h-[18px]" />
        <SnapRow label="Disable all" state={0} />
      </div>
    </div>
  );
}

/* ------------------------------------------------------------------ */
/* Viewports                                                           */
/* ------------------------------------------------------------------ */

type Box = { x0: number; y0: number; x1: number; y1: number };

function FlatGrid({ ox, oy, step, box }: { ox: number; oy: number; step: number; box: Box }) {
  let minor = '';
  let major = '';
  for (let i = -100; i <= 100; i++) {
    const x = ox + (i * step) / 10;
    const y = oy + (i * step) / 10;
    const lo = Math.max(box.y0, oy - step * 10);
    const hi = Math.min(box.y1, oy + step * 10);
    const le = Math.max(box.x0, ox - step * 10);
    const ri = Math.min(box.x1, ox + step * 10);
    let s = '';
    if (x >= box.x0 && x <= box.x1) s += `M${x} ${lo}V${hi}`;
    if (y >= box.y0 && y <= box.y1) s += `M${le} ${y}H${ri}`;
    if (i % 10 === 0) major += s;
    else minor += s;
  }
  return (
    <g fill="none" strokeWidth=".5" shapeRendering="crispEdges">
      <path d={minor} stroke="#929aa1" />
      <path d={major} stroke="#82858d" />
    </g>
  );
}

function Axes({ x, y, h, v }: { x: number; y: number; h: string; v: string }) {
  return (
    <g>
      <path d={`M${x} ${y - 30.4}V${y}H${x + 29.5}`} fill="none" stroke="#6a6c70" strokeWidth=".6" />
      <g fill="#5f6165" fontSize="13.5" fontFamily="Inter, sans-serif">
        <text x={x + 2.6} y={y - 29.2}>{v}</text>
        <text x={x + 32} y={y + 1.2}>{h}</text>
      </g>
    </g>
  );
}

function Viewport({ label, w, active, view, children }: { label: string; w: string; active?: boolean; view: string } & Kids) {
  return (
    <div className="relative overflow-hidden bg-[#9da3ab]">
      <svg viewBox={view} preserveAspectRatio="none" className="block h-full w-full">{children}</svg>
      <div
        className={
          'absolute top-[1.5px] left-[1px] flex h-[20px] items-center justify-center pt-[1.2px] text-[13px] font-bold tracking-[-0.45px] text-white ' +
          w +
          (active ? ' bg-[#215290]' : ' bg-[#8f908f]')
        }
      >
        {label}
      </div>
    </div>
  );
}

const hexRing = (a: number, b: number, c: number) => [[0, -c], [a, -b], [a, b], [0, c], [-a, b], [-a, -b]];
function PlanHex({ cy }: { cy: number }) {
  const out = hexRing(89, 51.6, 102.4);
  const inn = hexRing(81, 46.8, 93.3);
  const mid = hexRing(84.9, 49.2, 97.9);
  const line = (r: number[][]) => 'M' + r.map((p) => p.join(' ')).join('L') + 'Z';
  let joints = '';
  let ticks = '';
  for (let i = 0; i < 6; i++) {
    const n = (i + 1) % 6;
    const dx = out[n][0] - out[i][0];
    const dy = out[n][1] - out[i][1];
    const len = Math.hypot(dx, dy);
    const nx = (dy / len) * 7.9;
    const ny = (-dx / len) * 7.9;
    joints += `M${inn[i]}l${nx} ${ny}M${inn[n]}l${nx} ${ny}`;
    joints += `M${inn[i][0] + nx} ${inn[i][1] + ny}L${mid[i]}M${inn[n][0] + nx} ${inn[n][1] + ny}L${mid[n]}`;
    const mx = (inn[i][0] + inn[n][0]) / 2;
    const my = (inn[i][1] + inn[n][1]) / 2;
    ticks += `M${mx} ${my}l${nx} ${ny}`;
  }
  return (
    <g transform={`translate(721 ${cy})`} fill="none" stroke="#050505">
      <path d={line(out) + line(inn)} strokeWidth="1.2" strokeLinejoin="round" />
      <path d={line(mid) + ticks} strokeWidth=".6" />
      <path d={joints} strokeWidth=".9" />
    </g>
  );
}

function TopView() {
  return (
    <Viewport label="Top" w="w-[31px]" view="210 120.5 800.5 558">
      <FlatGrid ox={721} oy={558} step={19.48} box={{ x0: 210, y0: 120, x1: 1010, y1: 679 }} />
      <path d="M721 363.2V558" stroke="#4c9a4c" strokeWidth=".9" />
      <path d="M721 558H915.8" stroke="#a04a4c" strokeWidth=".9" />
      <path d="M721 244V431M632 337.7H810" stroke="#0a0a0a" strokeWidth=".65" />
      <path d="M632 558H640M802 558H810" stroke="#111" strokeWidth=".55" />
      <circle cx="721" cy="558" r="77.8" fill="none" stroke="#2a2b2d" strokeWidth=".55" />
      <PlanHex cy={337.8} />
      <PlanHex cy={557.9} />
      <Axes x={246.2} y={642.6} h="x" v="y" />
    </Viewport>
  );
}

/* The model in the camera view is digitised on a 1568-unit square. */
const cam = (pts: string) =>
  pts.split(' ').map((p) => {
    const [x, y] = p.split(',').map(Number);
    return `${(x * 0.31888 + 1010).toFixed(2)} ${(y * 0.35076 + 120).toFixed(2)}`;
  });
const open = (pts: string) => 'M' + cam(pts).join('L');
const closed = (pts: string) => open(pts) + 'Z';

function CameraGrid() {
  const q = [[486, 230], [1511, 578], [1136, 1480], [134, 1151]];
  const at = (s: number, t: number) => {
    const f = (k: number) => (q[0][k] * (1 - s) + q[1][k] * s) * (1 - t) + (q[3][k] * (1 - s) + q[2][k] * s) * t;
    return `${f(0)},${f(1)}`;
  };
  let minor = '';
  let major = '';
  for (let i = 0; i <= 200; i++) {
    const k = i / 200;
    const s = open(`${at(k, 0)} ${at(k, 1)}`) + open(`${at(0, k)} ${at(1, k)}`);
    if (i % 10 === 0) major += s;
    else minor += s;
  }
  return (
    <g fill="none">
      <path d={minor} stroke="#8b9299" strokeWidth=".3" strokeOpacity=".55" />
      <path d={major} stroke="#7b7e86" strokeWidth=".5" strokeOpacity=".8" />
    </g>
  );
}

function PerspectiveView() {
  return (
    <Viewport label="Perspective" w="w-[80px]" active view="1013.5 120.5 790.5 558">
      <CameraGrid />
      <path d={open('926,595 914,627')} stroke="#4c9a4c" strokeWidth=".9" />
      <path d={open('1048,945 1320,1035')} stroke="#a04a4c" strokeWidth=".9" />

      <g strokeLinejoin="round">
        <path d={closed('1118,79 1311,292 1208,551 913,595 721,383 821,126')} fill="#f6f6f6" stroke="#0a0a0a" strokeWidth="1.1" />
        <path d={closed('1110,104 1284,299 1191,529 926,571 749,381 838,144')} fill="#8d8d8d" stroke="#0a0a0a" strokeWidth="1" />
        <path d={closed('749,381 765,382 932,570 926,571')} fill="#666" />
        <path d={closed('1114,116 1282,300 1191,530 932,570 765,382 852,156')} fill="url(#face)" stroke="#0a0a0a" strokeWidth="1" />
        <path d={open('1112,108 1283,299')} stroke="#0a0a0a" strokeWidth="1.9" />
        <path d={open('932,570 1191,530')} stroke="#0a0a0a" strokeWidth="1.4" />
        <g fill="none" stroke="#111" strokeWidth=".5">
          <path d={closed('1115,91 1297,295 1200,541 920,583 735,382 830,136')} />
          <path d={open('757,381 845,150 1112,110') + open('757,381 929,570')} />
          <path d={open('1114,116 932,570') + open('772,257 803,268 1257,421')} />
          <path d={open('971,103 976,123 984,134') + open('1215,186 1198,198') + open('1057,552 1060,571') + open('819,489 838,477 851,476')} />
        </g>
        <g fill="none" stroke="#111" strokeWidth=".8">
          <path d={open('1106,82 1110,104 1127,90') + open('1304,285 1284,299 1308,303') + open('1211,538 1191,529 1194,551')} />
          <path d={open('909,590 926,571 926,594') + open('724,374 749,381 729,393') + open('819,138 838,144 835,124') + open('838,144 852,156')} />
        </g>
      </g>

      <g strokeLinejoin="round">
        <path d={closed('912,627 1096,826 1087,848 888,640')} fill="#6f6f6f" stroke="#0a0a0a" strokeWidth="1.1" />
        <path d={closed('605,679 892,636 908,640 1087,848 989,1087 698,1131 510,932')} fill="#fff" stroke="#0a0a0a" strokeWidth="1.1" />
        <path d={closed('605,678 630,668 912,626 905,634 625,675')} fill="#0a0a0a" stroke="#0a0a0a" strokeWidth=".8" />
        <path d={closed('622,695 643,692 560,910 537,922')} fill="#949494" stroke="#0a0a0a" strokeWidth="1" />
        <path d={closed('726,1088 980,1050 973,1070 710,1109')} fill="#949494" stroke="#0a0a0a" strokeWidth="1" />
        <path d={closed('537,922 560,910 726,1088 709,1109')} fill="#00407f" stroke="#0a0a0a" strokeWidth="1" />
        <path d={closed('622,695 890,655 1064,843 973,1070 710,1109 537,922')} fill="none" stroke="#0a0a0a" strokeWidth="1" />
        <g fill="none" stroke="#111" strokeWidth=".5">
          <path d={closed('614,686 898,645 1076,845 981,1079 704,1120 524,925')} />
          <path d={open('548,918 718,1100') + open('548,914 632,694') + open('722,1096 976,1059') + open('908,634 1091,838')} />
          <path d={open('753,656 756,675') + open('978,749 998,734 1003,727') + open('1016,957 1038,964') + open('845,1109 841,1090 852,1070')} />
          <path d={open('558,803 580,809 600,799') + open('607,1028 632,1005 642,1000')} />
        </g>
        <g fill="none" stroke="#111" strokeWidth=".8">
          <path d={open('605,690 622,695 617,676') + open('886,634 890,655 910,640') + open('1084,851 1064,843 1082,830')} />
          <path d={open('992,1077 973,1070 977,1089') + open('690,1122 710,1109 711,1130') + open('513,920 537,922 516,937')} />
        </g>
      </g>

      <path d={open('156,1410 125,1490 213,1520') + open('125,1490 125,1498')} fill="none" stroke="#6a6c70" strokeWidth=".6" />
      <g fill="#5f6165" fontSize="13.5" fontFamily="Inter, sans-serif">
        <text x="1062.5" y="613.8">y</text>
        <text x="1052" y="646.7">z</text>
        <text x="1080" y="653.7">x</text>
      </g>
    </Viewport>
  );
}

function FrontView() {
  return (
    <Viewport label="Front" w="w-[41.500px]" view="210 681.5 800.5 549.5">
      <FlatGrid ox={759.8} oy={1013.9} step={42.96} box={{ x0: 210, y0: 681, x1: 1011, y1: 1232 }} />
      <path d="M759.8 681V898" stroke="#4c9a4c" strokeWidth=".6" />
      <path d="M955.8 1013.9H1011" stroke="#a04a4c" strokeWidth=".9" />
      <g fill="none" stroke="#050505">
        <path d="M564 898H956.2" strokeWidth="1.2" />
        <path d="M564 1013.9H956.2" strokeWidth="1.1" />
        <path d="M581.7 996.7H938.8" strokeWidth="1.1" />
        <path d="M564.3 898V1013.9M581.7 898V1013.9M759.8 898V1013.9M938.8 898V1013.9M955.8 898V1013.9" strokeWidth="1" />
        <path d="M661.9 898V1013.9M670.4 898V1013.9M849.2 898V1013.9M857.7 898V1013.9M564 956.3H956" strokeWidth=".55" />
      </g>
      <Axes x={246.2} y={1195.4} h="x" v="z" />
    </Viewport>
  );
}

function RightView() {
  return (
    <Viewport label="Right" w="w-[41px]" view="1013.5 681.5 790.5 549.5">
      <FlatGrid ox={1408.2} oy={956.3} step={178.1} box={{ x0: 1013, y0: 681, x1: 1805, y1: 1232 }} />
      <path d="M1408.2 681V956.3" stroke="#1f5a1f" strokeWidth=".8" />
      <path d="M1013 715.7H1805" stroke="#0a0a0a" strokeWidth=".6" />
      <path d="M1013 884.9H1805" stroke="#050505" strokeWidth="1.2" />
      <path d="M1013 956.3H1805" stroke="#050505" strokeWidth="1.100" />
      <Axes x={1049.7} y={1195.4} h="y" v="z" />
    </Viewport>
  );
}

function Sep() {
  return <span className="h-[14px] w-[0.8px] bg-[#868686]" />;
}

function Center() {
  return (
    <div className="flex w-[1594px] shrink-0 flex-col">
      <div className="flex h-[25.5px] shrink-0 items-center border-b border-[#a5a6a5] bg-[#323232] pl-[10.5px] text-[13px] tracking-[-0.17px] text-[#dedede]">
        <svg viewBox="0 0 15 13" className="h-[13px] w-[15px]">
          <path d="M.5 .5H14.3V12.5H.5ZM7.4 .5V12.5M.5 6.6H14.3" fill="none" stroke="#58b8e0" strokeWidth=".7" />
          <path d="M.3 .9H3.5M7.5 .9H10.5M.3 7H3.5M7.5 7H10.5" stroke="#66cdf6" strokeWidth=".9" />
        </svg>
        <svg viewBox="0 0 15 13" className="ml-[17px] h-[13px] w-[15px]">
          <path d="M.5 .5H14.3V12.5H.5Z" fill="none" stroke="#b5b5b5" strokeWidth=".8" />
          <path d="M.3 1H3.5" stroke="#e0e0e0" strokeWidth="1" />
        </svg>
        <span className="w-[13.2px]" />
        <Sep />
        <span className="ml-[19.5px] w-[90.7px] pt-[1.4px] text-[#66cdf6]">Perspective</span>
        <Sep />
        <span className="ml-[19.8px] w-[42.4px] pt-[1.4px]">Top</span>
        <Sep />
        <span className="ml-[19.7px] w-[51.8px] pt-[1.4px]">Front</span>
        <Sep />
        <span className="ml-[20px] pt-[1.4px]">Right</span>
        <span className="mr-[10.6px] ml-auto pt-[1.8px] tracking-[-0.38px] text-[#9b9b9b]">Layouts…</span>
      </div>
      <div className="grid flex-1 grid-cols-[800.5px_790.5px] grid-rows-[558px_549.5px] gap-[3px] bg-[#d8d8d8]">
        <TopView />
        <PerspectiveView />
        <FrontView />
        <RightView />
      </div>
    </div>
  );
}

/* ------------------------------------------------------------------ */
/* Right column                                                        */
/* ------------------------------------------------------------------ */

function PanelTitle({ children }: Kids) {
  return (
    <div className="flex h-[25px] items-center pl-[12px]">
      <span className="flex-1 pt-[1px] text-center text-[11px] font-medium tracking-[-0.42px] text-[#e2e3e3]">{children}</span>
      <GearMenu />
    </div>
  );
}
function Rule({ mt }: { mt: string }) {
  return <div className={`${mt} ml-[8px] h-[1px] w-[283px] bg-[#4d5051]`} />;
}
function Section({ mt, children }: { mt: string } & Kids) {
  return <div className={`${mt} flex h-[18px] items-center pt-[0.6px] pl-[8px]`}>{children}</div>;
}
function Num({ label, value }: { label: string; value: string }) {
  return (
    <div className="flex h-[27px] items-center">
      <span className="mr-[9.3px] w-[91.7px] pt-[1.4px] text-right">{label}</span>
      <Field w="w-[59px]">{value}</Field>
    </div>
  );
}

function Properties() {
  return (
    <>
      <div className="h-[59px] shrink-0 border-b-[1.1px] border-[#545656] bg-[#323232]">
        <PanelTitle>Properties: Viewport</PanelTitle>
        <div className="mt-[3.5px] ml-[105px] flex items-center gap-[8px]">
          <svg viewBox="0 0 22 21" className="h-[21px] w-[22px]" fill="none" stroke="#3478f6">
            <path d="M.6 4.4H5.6L7.7 1H14.3L16.4 4.4H21.4V17.5H16M6 17.5H.6V4.4" strokeWidth="1.1" />
            <circle cx="11" cy="11.7" r="6.1" strokeWidth="1.1" />
            <circle cx="11" cy="11.7" r="4.2" strokeWidth="1.1" />
            <path d="M5.6 4.6H16.4" strokeWidth=".9" />
          </svg>
          <svg viewBox="0 0 22 21" className="h-[21px] w-[22px]" fill="none">
            <rect x=".5" y=".8" width="21" height="19" stroke="#a8a8a8" strokeWidth="1" />
            <rect x="2.6" y="3" width="16.8" height="14.6" stroke="#707070" strokeWidth=".8" />
            <rect x="4.7" y="5" width="12.6" height="10.4" stroke="#707070" strokeWidth=".8" />
          </svg>
          <svg viewBox="0 0 21 21" className="h-[21px] w-[21px]" fill="#323232" stroke="#a8a8a8" strokeWidth=".9">
            <circle cx="16.8" cy="4" r="3.7" />
            <circle cx="12.2" cy="9.4" r="4.6" />
            <circle cx="6.2" cy="15" r="5.8" />
          </svg>
        </div>
      </div>
      <div className="h-[509px] shrink-0 overflow-hidden pt-[8.5px] text-[11px] font-medium tracking-[-0.07px] text-[#e2e3e3]">
        <div className="flex h-[18px] items-center">
          <span className="mr-[9.5px] w-[53.5px] pt-[1.4px] text-right">Title:</span>
          <Field w="w-[215.5px]">Perspective</Field>
        </div>
        <div className="mt-[6.5px] flex h-[18px] items-center pt-[1.2px]">
          <span className="mr-[9.5px] w-[53.5px] text-right">Size:</span>1581 x 1115
        </div>
        <Rule mt="mt-[10px]" />
        <Section mt="mt-[6px]">Projection</Section>
        <div className="-mt-[0.3px]">
          <RadioRow>Parallel</RadioRow>
          <RadioRow on>Perspective</RadioRow>
          <RadioRow>Two point perspective</RadioRow>
        </div>
        <Rule mt="mt-[13.3px]" />
        <Section mt="mt-[6.3px]">Wallpaper</Section>
        <div className="mt-[3.7px] flex h-[18px] items-center pl-[35px]">
          <span className="w-[68px] pt-[1px]">Choose...</span>
          <Stepper />
        </div>
        <div className="mt-[3.2px] flex h-[18px] items-center gap-[5.4px] pl-[28px] text-[#6a6d6d]"><Check off /><span className="pt-[0.8px]">Show wallpaper</span></div>
        <div className="mt-[2.1px] flex h-[18px] items-center gap-[5.4px] pl-[28px] text-[#6a6d6d]"><Check off /><span className="pt-[0.8px]">Show wallpaper as gray scale</span></div>
        <Rule mt="mt-[14.7px]" />
        <Section mt="mt-[6.2px]">Camera</Section>
        <div className="h-[2px]" />
        <Num label="Lens length:" value="50" />
        <Num label="Rotation:" value="180" />
        <Num label="X location:" value="47.16" />
        <Num label="Y location:" value="104.32" />
        <Num label="Z location:" value="671.63" />
        <Rule mt="mt-[11.8px]" />
        <Section mt="mt-[6.2px]">Target</Section>
        <div className="h-[2px]" />
        <Num label="X target:" value="70.52" />
        <Num label="Y target:" value="41.51" />
      </div>
    </>
  );
}

const layers: [string, string][] = [
  ['D...', '#000000'],
  ['L...', '#c5331c'],
  ['L...', '#884dcf'],
  ['L...', '#1139f5'],
  ['L...', '#3a8b26'],
  ['L...', '#ffffff'],
];

function Bulb() {
  return (
    <svg viewBox="0 0 24 29" className="h-[14.5px] w-[12px]">
      <path d="M7.5 19Q6 15 3.5 12.5Q0 9 1 5.5Q3 .5 12 .3Q21 .5 23 5.5Q24 9 20.5 12.5Q18 15 16.5 19Z" fill="url(#lamp)" />
      <path d="M11 8L12 18L14 8" stroke="#e58a22" strokeWidth="1.6" fill="none" />
      <path d="M7.5 19H16.5V24.5Q15 28.5 12 28.7Q9 28.5 7.5 24.5Z" fill="#bcc1c6" />
      <path d="M7.5 21.2H16.5M8 23.6H16" stroke="#7d8287" strokeWidth="1" />
    </svg>
  );
}
function Padlock() {
  return (
    <svg viewBox="0 0 29 29" className="h-[14.5px] w-[14.5px]">
      <path d="M16.5 14V7Q16.5 2 21.5 2Q26.5 2 26.5 7V12" fill="none" stroke="#c9cbcc" strokeWidth="4.2" />
      <path d="M16.5 14V7Q16.5 2 21.5 2Q26.5 2 26.5 7V12" fill="none" stroke="#8e9091" strokeWidth="1" />
      <rect x="1.5" y="13" width="19.5" height="13.5" rx="1.5" fill="url(#brass)" />
      <path d="M2 17.5H21M2 21.5H21" stroke="#b56e22" strokeWidth=".9" />
      <path d="M1.5 13.5H21" stroke="#fbe0b4" strokeWidth="1.6" />
      <rect x=".5" y="26" width="22" height="2.4" fill="#c4c4c4" />
    </svg>
  );
}

function LayerIcons() {
  return (
    <svg viewBox="1805 689.5 299 28" className="block h-[28px] w-[299px]" fill="none" stroke="#a8a8a8" strokeWidth=".95">
      <g stroke="#3478f6" strokeWidth="1.1">
        <path d="M1846 694.2L1857.3 700.8L1846 707.3L1834.8 700.8Z" />
        <path d="M1838.5 702.9L1834.8 705.2L1846 711.8L1857.3 705.2L1853.5 702.9" />
      </g>
      <path d="M1870 693.8H1878.5L1882.9 698.5V711.3H1870ZM1878.5 693.8V698.5H1882.9" />
      <path d="M1896.7 699.5L1904.2 694.2L1914.2 698.5V708.3L1907 713.6L1896.7 709.5ZM1896.7 699.5L1907 703L1914.2 698.5M1907 703V713.6" />
      <path d="M1929.3 709.3V697.5Q1929.3 694.8 1932 694.8H1945Q1947 695 1946.8 697.7H1943.2V710Q1943 713 1940 713H1928.5Q1926 712.8 1926.2 710.8Q1926.3 709.3 1928.2 709.3H1939.5M1943.2 697.7Q1943 694.9 1945 694.8M1940 713Q1937.8 712.5 1938.2 710.7Q1939 709 1940.8 710.5" />
      <rect x="1955.7" y="694.2" width="20.7" height="16.3" rx="1" />
      <path d="M1957.6 696H1974.6V706.6H1957.6ZM1963.5 710.7L1962.7 712.3M1968.7 710.7L1969.5 712.3M1959.5 713H1972.6" />
      <circle cx="1996" cy="703.5" r="9.7" />
      <path d="M1992 700.3Q1992 697.3 1996 697.2Q2000 697.3 2000 700.5Q2000 702.5 1998 703.8Q1996 705 1996 707" strokeWidth="1.6" />
      <circle cx="1996" cy="710" r=".7" fill="#a8a8a8" />
      <path d="M2015.3 694V714.1H2035.5Z" />
      <path d="M2017 709.3L2026.5 698.5L2029 701L2020.3 711.3Q2018.5 712.6 2017.3 711.5Q2016.3 710.6 2017 709.3Z" fill="#323232" />
      <path d="M2022 695.2Q2027 691.5 2031.5 695.3L2033.3 699.3L2035.5 700L2036.5 702.3L2034 705L2030.8 702.5L2030.5 700.5L2028 698L2026.5 699Q2026 695.5 2022 695.2Z" fill="#323232" />
      <rect x="2044.3" y="701.9" width="23.3" height="13" />
      <path d="M2044.3 704.5H2067.6M2044.3 707.3H2067.6M2044.3 710.5H2067.6M2049.5 702L2046.5 715M2052.7 702L2051 715M2056 702V715M2059.3 702L2061 715M2062.5 702L2065.5 715" strokeWidth=".5" />
      <path d="M2067.6 691.8V697.5H2065V691.8ZM2065 692.3Q2060 691 2057.5 694L2054 698M2065 697.3Q2062 696.8 2060.5 698.5M2060 695L2055.5 699M2061 696.5L2057.5 699.3" strokeWidth=".8" />
    </svg>
  );
}

const COLS = 'grid grid-cols-[41.5px_22.9px_22.9px_23.2px_29.8px_24.1px_57px_23.1px_54.5px]';

function Layers() {
  return (
    <>
      <div className="h-[1.5px] shrink-0 bg-[#868686]" />
      <div className="h-[59px] shrink-0 border-b-[1.1px] border-[#545656] bg-[#323232]">
        <PanelTitle>Panels: Layers</PanelTitle>
        <LayerIcons />
      </div>
      <div className={`${COLS} h-[24px] shrink-0 items-center border-b-[1.1px] border-[#545656] bg-[#34383a] text-[11px] font-semibold tracking-[-0.3px] text-white`}>
        {['Name', '', '', '', '', '', 'Linetype', '', 'Print...'].map((t, i) => (
          <div key={i} className={'flex h-[16.5px] items-center pt-[0.8px] pl-[4.6px] ' + (i < 8 ? 'border-r-[1.1px] border-[#505354]' : '')}>{t}</div>
        ))}
      </div>
      <div className="flex-1 bg-[#25292a] pt-[0.2px] text-[11px] font-medium tracking-[-0.07px] text-[#dfe0e0]">
        {layers.map(([name, color], i) => (
          <div key={i} className={`${COLS} h-[17.06px] items-center justify-items-center`}>
            <span className="w-full pt-[0.6px] pl-[19.3px]">{name}</span>
            <Radio on={i === 0} dark />
            <span className={i === 0 ? 'opacity-50' : ''}><Bulb /></span>
            <span className={i === 0 ? 'opacity-50' : ''}><Padlock /></span>
            <span className="h-[14px] w-[13.8px] border-[1.1px] border-black" style={{ background: color }} />
            <span className="mr-[5.5px] h-[14px] w-[13.8px] rounded-full border-[0.6px] border-black bg-[#fdfdfd]" />
            <span className="flex w-full items-center justify-between pt-[1.4px] pr-[4.2px] pl-[6.6px] tracking-[-0.15px]">Conti...<Stepper c="#858888" /></span>
            <svg viewBox="0 0 30 30" className="h-[15px] w-[15px]">
              <path d="M15 1L29 15L15 29L1 15Z" fill={color} stroke="#000" strokeWidth="1.6" />
            </svg>
            <span className="flex w-full items-center justify-between pt-[1.4px] pr-[4.6px] pl-[6.6px] tracking-[-0.15px]">Defa...<Stepper c="#858888" /></span>
          </div>
        ))}
      </div>
      <div className="flex h-[33px] shrink-0 items-start border-t-[1.1px] border-[#545656] bg-[#363a3b] pt-[7px] pl-[19px]">
        <div className="flex h-[16px] w-[46px] items-center rounded-[3.5px] bg-[#696c6b] shadow-[0_0.5px_0.6px_rgba(0,0,0,.5),inset_0_0.6px_0_#858786]">
          <svg viewBox="0 0 46 16" className="h-[16px] w-[46px]">
            <path d="M7 7.7H18.3M12.6 2.2V13" stroke="#f4f4f4" strokeWidth="1" />
            <path d="M23.5 .6V16" stroke="#565958" strokeWidth=".6" />
            <path d="M28.3 7.7H39" stroke="#8f9190" strokeWidth="1" />
          </svg>
        </div>
        <div className="ml-[18px] flex h-[16px] w-[34px] items-center rounded-[3.5px] bg-[#696c6b] pl-[6px] shadow-[0_0.5px_0.6px_rgba(0,0,0,.5),inset_0_0.6px_0_#858786]">
          <Gear className="h-[10px] w-[10px]" color="#2d2f2f" hole="#696c6b" />
          <svg viewBox="0 0 7 5" className="ml-[8px] h-[5px] w-[7px]">
            <path d="M.8 .7L3.5 3.9L6.2 .7" fill="none" stroke="#f1f1f1" strokeWidth="1.2" />
          </svg>
        </div>
      </div>
    </>
  );
}

/* ------------------------------------------------------------------ */
/* Status bar                                                          */
/* ------------------------------------------------------------------ */

function Status() {
  return (
    <div className="flex h-[28px] shrink-0 items-center border-t-[1.1px] border-black bg-[#323232] pt-[0.6px] pl-[4.5px] text-[11px] font-medium tracking-[-0.06px] whitespace-nowrap text-[#dedfdf]">
      <svg viewBox="0 0 14 10" className="mr-[2.8px] h-[10px] w-[14px]">
        <path d="M0 .9H14M0 3.6H14M0 6.3H14M0 9H14" stroke="#b0b0b0" strokeWidth=".7" />
      </svg>
      <span className="w-[1516px] pt-[1.2px]">Creating meshes... Press Esc to cancelSuccessfully read file "/Users/cyrusmajd/Documents/</span>
      <span className="w-[73.7px] pt-[1.2px]">Millimeters</span>
      <div className="mr-[14px] flex h-[15.7px] w-[70px] items-center justify-between rounded-[4px] border-[1.1px] border-[#767777] pr-[4.5px] pl-[6.3px]">
        <span className="pt-[1.2px]">CPlane</span>
        <Stepper c="#d8d8d8" />
      </div>
      <span className="w-[82px] pt-[1.2px] tracking-[-0.25px]">X: 292.954</span>
      <span className="w-[85px] pt-[1.2px] tracking-[-0.25px]">Y: -463.343</span>
      <span className="pt-[1.2px] tracking-[-0.25px]">Z: 0.000</span>
    </div>
  );
}

export default function App() {
  return (
    <div className="h-[1333px] w-[2160px] overflow-hidden bg-white pt-[38px] pl-[56px] font-['Inter',sans-serif] leading-none [zoom:1.8962963]">
      <Defs />
      <div className="h-[1221px] w-[2048px] rounded-[5.5px] shadow-[0_0_0_0.6px_#000,0_20px_48px_rgba(0,0,0,.75)]">
        <div className="relative flex h-full w-full flex-col overflow-hidden rounded-[5.5px]">
          <Header />
          <div className="flex h-[1136px] shrink-0">
            <LeftColumn />
            <Center />
            <div className="flex w-[300px] shrink-0 flex-col border-l-[1.1px] border-[#868686] bg-[#363a3b]">
              <Properties />
              <Layers />
            </div>
          </div>
          <Status />
          <div className="pointer-events-none absolute inset-0 rounded-[5.5px] border-[1.1px] border-white/20 border-t-white/35" />
        </div>
      </div>
    </div>
  );
}
